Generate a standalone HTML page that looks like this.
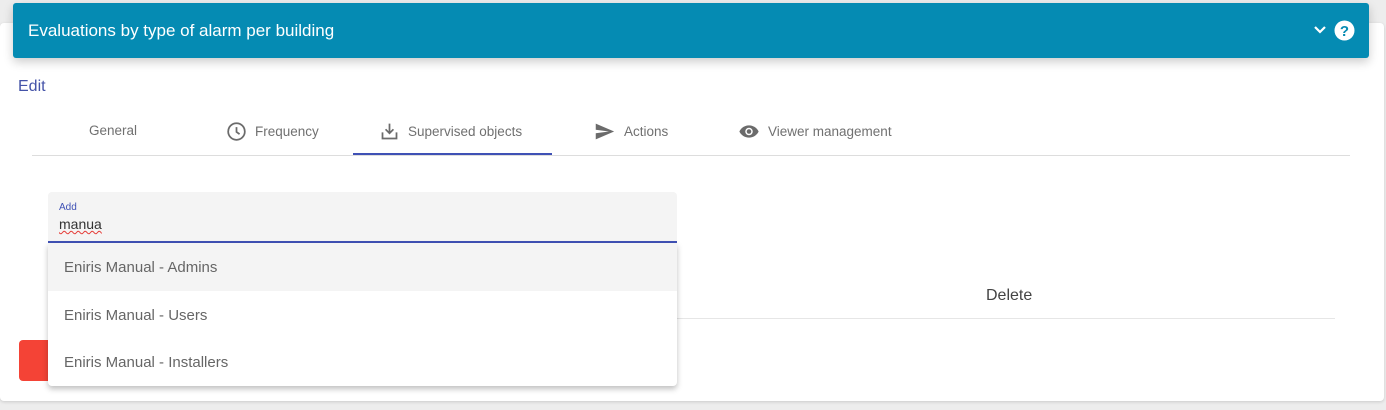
<!DOCTYPE html>
<html><head><meta charset="utf-8"><style>
*{box-sizing:border-box;margin:0;padding:0}
body{width:1386px;height:410px;background:#ededed;font-family:"Liberation Sans",sans-serif;position:relative;overflow:hidden}
.card{position:absolute;left:0;top:23px;width:1384px;height:378px;background:#fff;border-radius:4px;box-shadow:0 1px 3px rgba(0,0,0,.15)}
.hdr{position:absolute;left:13px;top:3px;width:1356px;height:55px;background:#058bb3;border-radius:3px;box-shadow:0 4px 10px rgba(0,0,0,.2);color:#fff;font-size:17px;line-height:55px;padding-left:15px}
.abs{position:absolute}
.tab{position:absolute;top:123px;font-size:13.5px;color:#707070;display:flex;align-items:center;gap:8px}
.opt{position:absolute;left:0;width:629px;height:48px;font-size:15px;color:#666;padding-left:16px;line-height:50px}
</style></head><body>
<div class="card"></div>
<div class="hdr">Evaluations by type of alarm per building
<svg class="abs" style="left:1300px;top:21px" width="14" height="12" viewBox="0 0 14 12"><path d="M2 3l5 5 5-5" stroke="#fff" stroke-width="2.2" fill="none"/></svg>
<svg class="abs" style="left:1321px;top:17px" width="21" height="21" viewBox="0 0 21 21"><circle cx="10.5" cy="10.5" r="10" fill="#fff"/><text x="10.5" y="16" text-anchor="middle" font-family="Liberation Sans" font-weight="bold" font-size="15" fill="#058bb3">?</text></svg>
</div>
<div class="abs" style="left:18px;top:78px;font-size:16px;color:#4453a8">Edit</div>
<div class="tab" style="left:89px">General</div>
<div class="tab" style="left:226px;top:121px"><svg width="21" height="21" viewBox="0 0 24 24"><circle cx="12" cy="12" r="9.5" stroke="#6b6b6b" stroke-width="2" fill="none"/><path d="M12 7v5.5l3.5 2.5" stroke="#6b6b6b" stroke-width="2" fill="none"/></svg>Frequency</div>
<div class="tab" style="left:379px;top:121px"><svg width="21" height="21" viewBox="0 0 24 24"><path d="M12 3v11M7.5 9.5L12 14l4.5-4.5M4 13v7h16v-7" stroke="#6b6b6b" stroke-width="2" fill="none"/></svg>Supervised objects</div>
<div class="tab" style="left:593px;top:121px"><svg width="23" height="21" viewBox="0 0 24 24"><path d="M2 21l21-9L2 3v7l15 2-15 2z" fill="#6b6b6b"/></svg>Actions</div>
<div class="tab" style="left:738px;top:121px"><svg width="22" height="21" viewBox="0 0 24 24"><path d="M12 5C7 5 2.7 8.1 1 12c1.7 3.9 6 7 11 7s9.3-3.1 11-7c-1.7-3.9-6-7-11-7z" fill="#6b6b6b"/><circle cx="12" cy="12" r="4.3" fill="#fff"/><circle cx="12" cy="12" r="2.6" fill="#6b6b6b"/></svg>Viewer management</div>
<div class="abs" style="left:353px;top:153px;width:199px;height:2px;background:#3f51b5"></div>
<div class="abs" style="left:32px;top:155px;width:1318px;height:1px;background:#ddd"></div>
<div class="abs" style="left:48px;top:192px;width:629px;height:51px;background:#f4f4f4;border-radius:4px 4px 0 0;border-bottom:2px solid #3f51b5">
<div class="abs" style="left:11px;top:10px;font-size:10px;color:#3f51b5">Add</div>
<div class="abs" style="left:11px;top:24px;font-size:14px;color:#333;text-decoration:underline wavy #e53935;text-decoration-thickness:1px">manua</div>
</div>
<div class="abs" style="left:986px;top:287px;font-size:16px;color:#444">Delete</div>
<div class="abs" style="left:677px;top:318px;width:658px;height:1px;background:#e6e6e6"></div>
<div class="abs" style="left:19px;top:340px;width:40px;height:41px;background:#f44336;border-radius:4px"></div>
<div class="abs" style="left:48px;top:243px;width:629px;height:143px;background:#fff;border-radius:0 0 4px 4px;box-shadow:0 3px 6px rgba(0,0,0,.25)">
<div class="opt" style="top:0;background:#f4f4f4">Eniris Manual - Admins</div>
<div class="opt" style="top:48px">Eniris Manual - Users</div>
<div class="opt" style="top:95px">Eniris Manual - Installers</div>
</div>
</body></html>
